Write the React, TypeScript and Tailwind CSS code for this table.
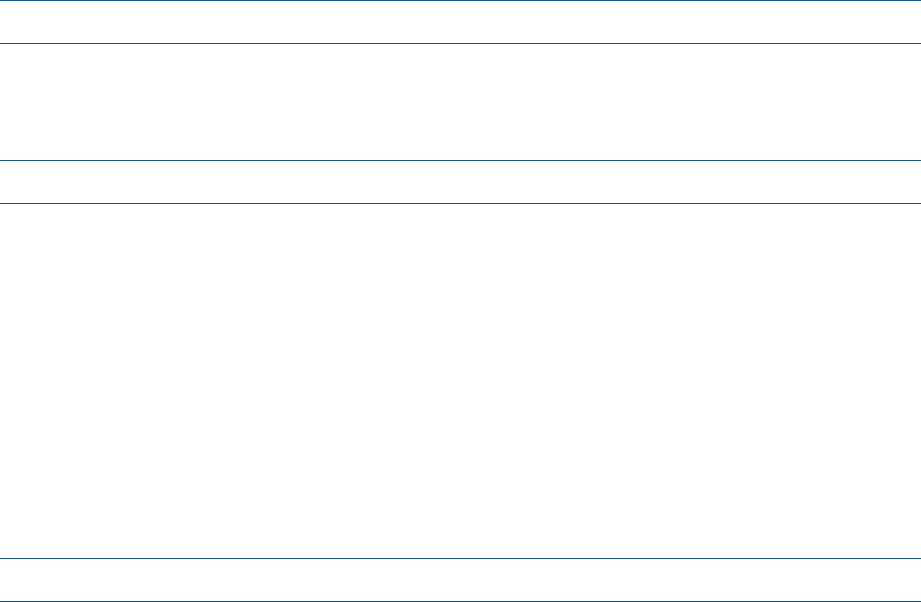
export default function App() {
  return (
    <div className="flex h-[602px] w-full flex-col bg-white">
      <div className="h-[44px] border-y border-[#17578f]" />
      <div className="h-[116px]" />
      <div className="h-[44px] border-y border-[#17578f]" />
      <div className="h-[354px]" />
      <div className="h-[44px] border-y border-[#17578f]" />
    </div>
  )
}
